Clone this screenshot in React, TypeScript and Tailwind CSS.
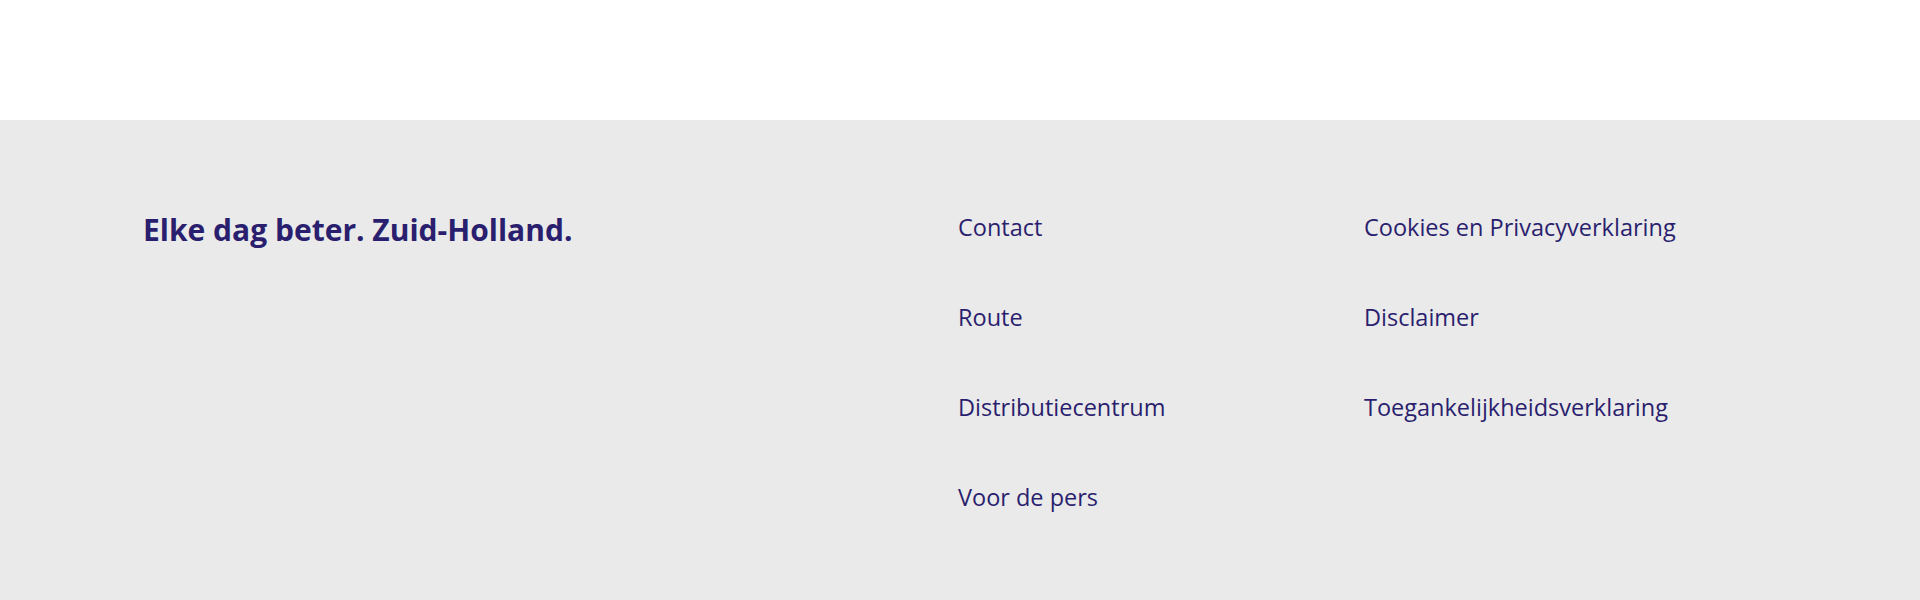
const leftLinks = ['Contact', 'Route', 'Distributiecentrum', 'Voor de pers'];
const rightLinks = ['Cookies en Privacyverklaring', 'Disclaimer', 'Toegankelijkheidsverklaring'];

function LinkColumn({ links }: { links: string[] }) {
  return (
    <ul className="flex flex-col gap-[60px]">
      {links.map(link => (
        <li key={link}>
          <a href="#" className="block text-[23.5px] leading-[30px] font-medium text-[#2a1f6e] hover:underline">
            {link}
          </a>
        </li>
      ))}
    </ul>
  );
}

export default function App() {
  return (
    <div className="min-h-[600px] bg-white" style={{ fontFamily: '"Open Sans", "Liberation Sans", sans-serif' }}>
      <div className="h-[120px]" />
      <footer className="bg-[#eaeaea] h-[480px] pt-[92px] pl-[143px] flex">
        <p className="w-[815px] text-[30px] leading-[36px] font-bold text-[#2a1f6e]">
          Elke dag beter. Zuid-Holland.
        </p>
        <div className="w-[406px]">
          <LinkColumn links={leftLinks} />
        </div>
        <div className="w-[406px]">
          <LinkColumn links={rightLinks} />
        </div>
      </footer>
    </div>
  );
}
